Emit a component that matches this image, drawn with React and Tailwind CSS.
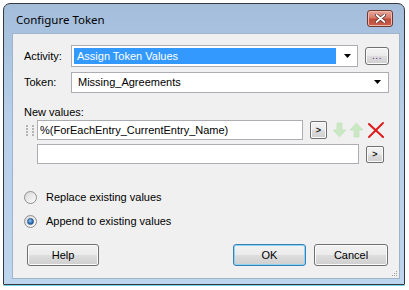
import React from "react";

const btnFace =
  "bg-[linear-gradient(to_bottom,#f2f2f2_0%,#ebebeb_48%,#dddddd_52%,#cfcfcf_100%)]";

function ComboArrow() {
  return (
    <svg width="8" height="5" viewBox="0 0 8 5" className="shrink-0">
      <path d="M0 0 H7 L3.5 4 Z" fill="#000" />
    </svg>
  );
}

function Button({ children, className = "", focused = false }) {
  return (
    <div
      className={`flex items-center justify-center rounded-[3px] border ${
        focused
          ? "border-[#3c7fb1] shadow-[inset_0_0_0_1px_#8ad5f5]"
          : "border-[#707070] shadow-[inset_0_0_0_1px_#fbfbfb]"
      } ${btnFace} text-[11px] text-black ${className}`}
    >
      {children}
    </div>
  );
}

function SmallButton({ className = "" }) {
  return (
    <div
      className={`flex items-center justify-center rounded-[2px] border border-[#707070] shadow-[inset_0_0_0_1px_#fbfbfb] ${btnFace} ${className}`}
    >
      <span className="text-[9px] leading-none font-bold text-[#1a1a1a]">&gt;</span>
    </div>
  );
}

function Radio({ checked, label, className = "" }) {
  return (
    <div className={`flex h-[16px] items-center ${className}`}>
      <div className="flex h-[13px] w-[13px] items-center justify-center rounded-full border border-[#8e8f8f] bg-[linear-gradient(135deg,#d9d9d9,#fbfbfb)]">
        {checked && (
          <div className="h-[7px] w-[7px] rounded-full border border-[#2a5b8f] bg-[radial-gradient(circle_at_40%_35%,#8fc8f5,#1d5fa8_70%)]" />
        )}
      </div>
      <span className="ml-[9px] text-[11px] text-black">{label}</span>
    </div>
  );
}

function ArrowIcon({ up }) {
  return (
    <svg width="15" height="16" viewBox="0 0 15 16">
      <path
        d={up ? "M7.5 1 L14 8 H10 V15 H5 V8 H1 Z" : "M7.5 15 L14 8 H10 V1 H5 V8 H1 Z"}
        fill="#cbe8c4"
        stroke="#bcdfb3"
        strokeWidth="0.6"
      />
    </svg>
  );
}

function DeleteIcon() {
  return (
    <svg width="18" height="16" viewBox="0 0 18 16">
      <path d="M2 2 C7 7 11 10 16 15" stroke="#e01818" strokeWidth="2" fill="none" strokeLinecap="round" />
      <path d="M16 1 C11 6 7 10 2 15" stroke="#e01818" strokeWidth="1.8" fill="none" strokeLinecap="round" />
    </svg>
  );
}

function Handle() {
  return (
    <div className="ml-[2px] grid w-[11px] grid-cols-2 gap-x-[1px] gap-y-[1px]">
      {Array.from({ length: 8 }).map((_, i) => (
        <span key={i} className="h-[2px] w-[2px] bg-[#b4b4b4]" />
      ))}
    </div>
  );
}

export default function App() {
  return (
    <div className="h-[290px] w-[409px] overflow-hidden bg-white pt-[3px] pl-[3px] font-['Liberation_Sans',Arial,sans-serif]">
      <div className="flex h-[282px] w-[402px] flex-col rounded-t-[7px] rounded-b-[1px] border border-[#343a40] bg-[linear-gradient(to_bottom,#a3bddb_0%,#b7cfe9_40%,#bed5ee_100%)] shadow-[0_1px_0_#74d4e8]">
        <div className="flex h-[29px] items-center justify-between pl-[12px] pr-[11px]">
          <span className="pt-[2px] font-['Noto_Sans',sans-serif] text-[11.5px] text-black">Configure Token</span>
          <div className="flex h-[17px] w-[26px] items-center justify-center rounded-[3px] border border-[#6b3a33] bg-[linear-gradient(to_bottom,#e8a799_0%,#d57a6b_45%,#c14a38_55%,#c8604e_100%)] shadow-[inset_0_0_0_1px_#f0b9ab]">
            <svg width="11" height="9" viewBox="0 0 11 9">
              <path d="M1.5 1 L9.5 8 M9.5 1 L1.5 8" stroke="#4d2a25" strokeWidth="3.2" strokeLinecap="round" />
              <path d="M1.5 1 L9.5 8 M9.5 1 L1.5 8" stroke="#ffffff" strokeWidth="1.8" strokeLinecap="round" />
            </svg>
          </div>
        </div>

        <div className="relative ml-[8px] mr-[4px] mb-[5px] flex flex-1 flex-col border border-[#9fb3c9] bg-[#f0f0f0] pl-[11px] pt-[11px] text-[11px] text-black">
          <div className="flex h-[22px] items-center">
            <span className="w-[47px]">Activity:</span>
            <div className="flex h-[22px] w-[287px] items-center border border-[#abadb3] bg-white pl-[2px] pr-[5px]">
              <div className="flex h-[16px] flex-1 items-center bg-[#3399ff] pl-[3px] text-white">
                Assign Token Values
              </div>
              <div className="ml-[8px]">
                <ComboArrow />
              </div>
            </div>
            <Button className="ml-[7px] h-[18px] w-[24px] items-end pb-[3px]">
              <span className="text-[10px] leading-none tracking-[0.5px] text-[#5b2a8a]">...</span>
            </Button>
          </div>

          <div className="mt-[5px] flex h-[21px] items-center">
            <span className="w-[47px]">Token:</span>
            <div className="flex h-[21px] w-[318px] items-center justify-between border border-[#abadb3] bg-white pl-[6px] pr-[6px]">
              <span>Missing_Agreements</span>
              <ComboArrow />
            </div>
          </div>

          <div className="mt-[13px] h-[13px] leading-[13px]">New values:</div>

          <div className="mt-[1px] flex h-[20px] items-center">
            <div className="w-[13px]">
              <Handle />
            </div>
            <div className="flex h-[20px] w-[266px] items-center border border-[#abadb3] bg-white pl-[2px]">
              %(ForEachEntry_CurrentEntry_Name)
            </div>
            <SmallButton className="ml-[7px] h-[18px] w-[17px]" />
            <div className="ml-[5px] flex items-center">
              <ArrowIcon />
              <div className="ml-[2px]">
                <ArrowIcon up />
              </div>
              <div className="ml-[3px]">
                <DeleteIcon />
              </div>
            </div>
          </div>

          <div className="mt-[4px] flex h-[20px] items-center">
            <div className="ml-[13px] h-[20px] w-[322px] border border-[#abadb3] bg-white" />
            <SmallButton className="ml-[7px] h-[17px] w-[18px]" />
          </div>

          <Radio className="mt-[25px]" label="Replace existing values" />
          <Radio className="mt-[8px]" checked label="Append to existing values" />

          <div className="mt-[15px] flex h-[22px] items-center">
            <Button className="ml-[3px] h-[22px] w-[72px]">Help</Button>
            <Button focused className="ml-[134px] h-[22px] w-[73px]">OK</Button>
            <Button className="ml-[8px] h-[22px] w-[74px]">Cancel</Button>
          </div>

          <div className="absolute right-[2px] bottom-[2px] grid grid-cols-3 gap-[1px]">
            <span className="h-[1px] w-[1px]" />
            <span className="h-[1px] w-[1px]" />
            <span className="h-[1px] w-[1px] bg-[#a0a0a0]" />
            <span className="h-[1px] w-[1px]" />
            <span className="h-[1px] w-[1px] bg-[#a0a0a0]" />
            <span className="h-[1px] w-[1px] bg-[#a0a0a0]" />
            <span className="h-[1px] w-[1px] bg-[#a0a0a0]" />
            <span className="h-[1px] w-[1px] bg-[#a0a0a0]" />
            <span className="h-[1px] w-[1px] bg-[#a0a0a0]" />
          </div>
        </div>
      </div>
    </div>
  );
}
